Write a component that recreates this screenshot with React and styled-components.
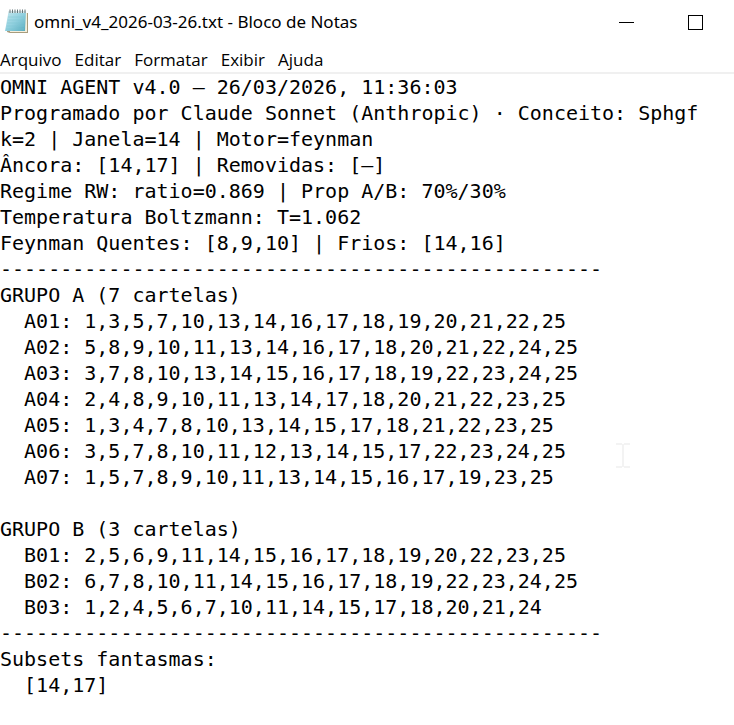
import React, { useState } from 'react';
import styled, { createGlobalStyle } from 'styled-components';

const GlobalStyle = createGlobalStyle`
  *, *::before, *::after {
    box-sizing: border-box;
  }

  body {
    margin: 0;
    background-color: #ffffff;
    color: #000000;
    font-family: "Noto Sans", "Open Sans", sans-serif;
  }
`;

const Window = styled.div`
  display: flex;
  flex-direction: column;
  min-height: 100vh;
  overflow: hidden;
`;

const TitleBar = styled.header`
  display: flex;
  align-items: center;
  height: 44px;
  padding: 0 4px;
`;

const Title = styled.h1`
  flex: 1;
  margin: 0 0 0 4px;
  font-size: 17px;
  font-weight: 400;
  line-height: 24px;
  white-space: nowrap;
`;

const WindowButton = styled.button`
  display: flex;
  align-items: center;
  justify-content: center;
  width: 69px;
  height: 44px;
  padding: 0;
  border: 0;
  background: transparent;
`;

const MenuBar = styled.nav`
  display: flex;
  gap: 13px;
  height: 30px;
  padding-top: 4px;
  border-bottom: 2px solid #f0f0f0;
`;

const MenuButton = styled.button`
  padding: 0;
  border: 0;
  background: transparent;
  color: inherit;
  font-family: "Open Sans", "Noto Sans", sans-serif;
  font-size: 17px;
  line-height: 24px;
`;

const Editor = styled.main`
  position: relative;
  display: flex;
  flex: 1;
`;

const TextArea = styled.textarea`
  flex: 1;
  min-width: 0;
  field-sizing: content;
  padding: 0;
  border: 0;
  outline: 0;
  resize: none;
  overflow: hidden;
  background: transparent;
  color: #000000;
  font-family: "DejaVu Sans Mono", "Liberation Mono", monospace;
  font-size: 20px;
  line-height: 26px;
  white-space: pre;
`;

// Mouse pointer resting over the text
const Pointer = styled.svg`
  position: absolute;
  top: 369px;
  left: 616px;
  pointer-events: none;
`;

const menus = ['Arquivo', 'Editar', 'Formatar', 'Exibir', 'Ajuda'];

const separator = '-'.repeat(50);

const content = [
  'OMNI AGENT v4.0 — 26/03/2026, 11:36:03',
  'Programado por Claude Sonnet (Anthropic) · Conceito: Sphgf',
  'k=2 | Janela=14 | Motor=feynman',
  'Âncora: [14,17] | Removidas: [—]',
  'Regime RW: ratio=0.869 | Prop A/B: 70%/30%',
  'Temperatura Boltzmann: T=1.062',
  'Feynman Quentes: [8,9,10] | Frios: [14,16]',
  separator,
  'GRUPO A (7 cartelas)',
  '  A01: 1,3,5,7,10,13,14,16,17,18,19,20,21,22,25',
  '  A02: 5,8,9,10,11,13,14,16,17,18,20,21,22,24,25',
  '  A03: 3,7,8,10,13,14,15,16,17,18,19,22,23,24,25',
  '  A04: 2,4,8,9,10,11,13,14,17,18,20,21,22,23,25',
  '  A05: 1,3,4,7,8,10,13,14,15,17,18,21,22,23,25',
  '  A06: 3,5,7,8,10,11,12,13,14,15,17,22,23,24,25',
  '  A07: 1,5,7,8,9,10,11,13,14,15,16,17,19,23,25',
  '',
  'GRUPO B (3 cartelas)',
  '  B01: 2,5,6,9,11,14,15,16,17,18,19,20,22,23,25',
  '  B02: 6,7,8,10,11,14,15,16,17,18,19,22,23,24,25',
  '  B03: 1,2,4,5,6,7,10,11,14,15,17,18,20,21,24',
  separator,
  'Subsets fantasmas:',
  '  [14,17]',
].join('\n');

const NotepadIcon = () => (
  <svg width="26" height="26" viewBox="0 0 26 26" aria-hidden="true">
    <defs>
      <linearGradient id="sheet" x1="0" y1="0" x2="1" y2="1">
        <stop offset="0" stopColor="#c4e7ee" />
        <stop offset="0.5" stopColor="#91d0df" />
        <stop offset="1" stopColor="#55aabd" />
      </linearGradient>
    </defs>
    <path d="M5 4H24V24H6L3 23Z" fill="#a89c7d" />
    <path d="M6 4H23V23H6Z" fill="#f4efdc" />
    <path d="M4.500 3H22L21 22L1 22Z" fill="url(#sheet)" />
    <path d="M4.500 2H22V4H4Z" fill="#d5e5e8" />
    <path d="M4 8H21M4 11H21M3 14H20M3 17H20M2 20H20" stroke="#7fc4d2" strokeWidth="0.500" />
    <path d="M6 0.500V4M8.500 0.500V4M11 0.500V4M13.500 0.500V4M16 0.500V4M18.500 0.500V4M21 0.500V4" stroke="#65767a" strokeWidth="1" />
  </svg>
);

export default function App() {
  const [text, setText] = useState(content);

  return (
    <Window>
      <GlobalStyle />
      <TitleBar>
        <NotepadIcon />
        <Title>omni_v4_2026-03-26.txt - Bloco de Notas</Title>
        <WindowButton aria-label="Minimizar">
          <svg width="15" height="15" viewBox="0 0 15 15">
            <path d="M0 7.500H15" stroke="#000000" />
          </svg>
        </WindowButton>
        <WindowButton aria-label="Maximizar">
          <svg width="15" height="15" viewBox="0 0 15 15">
            <rect x="0.500" y="0.500" width="14" height="14" fill="none" stroke="#000000" />
          </svg>
        </WindowButton>
      </TitleBar>

      <MenuBar aria-label="Menu">
        {menus.map((menu) => (
          <MenuButton key={menu}>{menu}</MenuButton>
        ))}
      </MenuBar>

      <Editor>
        <TextArea
          aria-label="Texto do documento"
          spellCheck={false}
          value={text}
          onChange={(e) => setText(e.target.value)}
        />
        <Pointer width="14" height="25" viewBox="0 0 14 25" aria-hidden="true">
          <path d="M0 1H6M8 1H14M7 1V24M0 24H6M8 24H14" fill="none" stroke="#f3f3f3" strokeWidth="2" />
        </Pointer>
      </Editor>
    </Window>
  );
}
